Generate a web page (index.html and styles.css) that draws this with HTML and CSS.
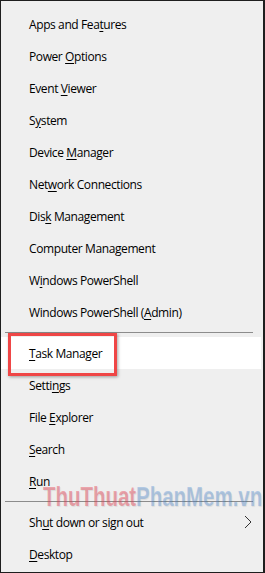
FILE: index.html
```html
<!DOCTYPE html>
<html>
<head>
<meta charset="utf-8">
<link rel="stylesheet" href="styles.css">
</head>
<body>
<div class="menu">
  <div class="item"><span class="label">Apps and Fea<u>t</u>ures</span></div>
  <div class="item"><span class="label">Power <u>O</u>ptions</span></div>
  <div class="item"><span class="label">Event <u>V</u>iewer</span></div>
  <div class="item"><span class="label">S<u>y</u>stem</span></div>
  <div class="item"><span class="label">Device <u>M</u>anager</span></div>
  <div class="item"><span class="label">Net<u>w</u>ork Connections</span></div>
  <div class="item"><span class="label">Dis<u>k</u> Management</span></div>
  <div class="item"><span class="label">Computer Mana<u>g</u>ement</span></div>
  <div class="item"><span class="label">W<u>i</u>ndows PowerShell</span></div>
  <div class="item"><span class="label">Windows PowerShell (<u>A</u>dmin)</span></div>
  <div class="sep"></div>
  <div class="item active"><span class="label"><u>T</u>ask Manager</span><span class="mark"></span></div>
  <div class="item"><span class="label">Setti<u>n</u>gs</span></div>
  <div class="item"><span class="label">File <u>E</u>xplorer</span></div>
  <div class="item"><span class="label"><u>S</u>earch</span></div>
  <div class="item"><span class="label"><u>R</u>un</span></div>
  <div class="sep"></div>
  <div class="item sub"><span class="label">Sh<u>u</u>t down or sign out</span>
    <svg class="chev" width="8" height="14" viewBox="0 0 8 14"><polyline points="1,1 7,7 1,13" fill="none" stroke="#333" stroke-width="1"/></svg>
  </div>
  <div class="item"><span class="label"><u>D</u>esktop</span></div>
  <div class="watermark"><span class="wm-red">ThuThuat</span><span class="wm-blue">PhanMem.vn</span></div>
</div>
</body>
</html>
```
FILE: styles.css
```css
html, body {
  margin: 0;
  padding: 0;
  background: #efefef;
}
.menu {
  position: relative;
  width: 265px;
  height: 573px;
  box-sizing: border-box;
  border: 1px solid #1e1e1e;
  border-right-width: 2px;
  background: #efefef;
  padding-top: 7px;
  font-family: "Open Sans", "Noto Sans", sans-serif;
  font-size: 12px;
  letter-spacing: -0.4px;
  color: #000;
  overflow: hidden;
}
.item {
  position: relative;
  height: 32px;
  display: flex;
  align-items: center;
  padding-left: 28px;
  margin-right: 2px;
  white-space: nowrap;
}
.label {
  white-space: pre;
}
.item u {
  text-decoration: underline;
  text-underline-offset: 2px;
}
.active {
  background: #ffffff;
}
.mark {
  position: absolute;
  left: 7px;
  top: -4px;
  width: 103px;
  height: 37px;
  border: 3px solid #ef4646;
  box-shadow: 1px 1px 3px rgba(0,0,0,0.35);
}
.sep {
  height: 9px;
  display: flex;
  align-items: center;
  margin: 0 10px 0 4px;
}
.sep::before {
  content: "";
  display: block;
  width: 100%;
  height: 1px;
  background: #8c8c8c;
}
.sub {
  justify-content: space-between;
}
.chev {
  margin-right: 9px;
}
.watermark {
  position: absolute;
  left: 42px;
  top: 480px;
  font-family: "Liberation Sans", Arial, sans-serif;
  font-weight: bold;
  font-size: 28px;
  letter-spacing: 0;
  white-space: nowrap;
  transform: scaleX(0.73);
  transform-origin: left top;
  text-shadow: 1px 1px 1px rgba(0,0,0,0.08);
  pointer-events: none;
}
.wm-red {
  color: rgba(232, 70, 85, 0.45);
}
.wm-blue {
  color: rgba(80, 140, 210, 0.38);
}
```
